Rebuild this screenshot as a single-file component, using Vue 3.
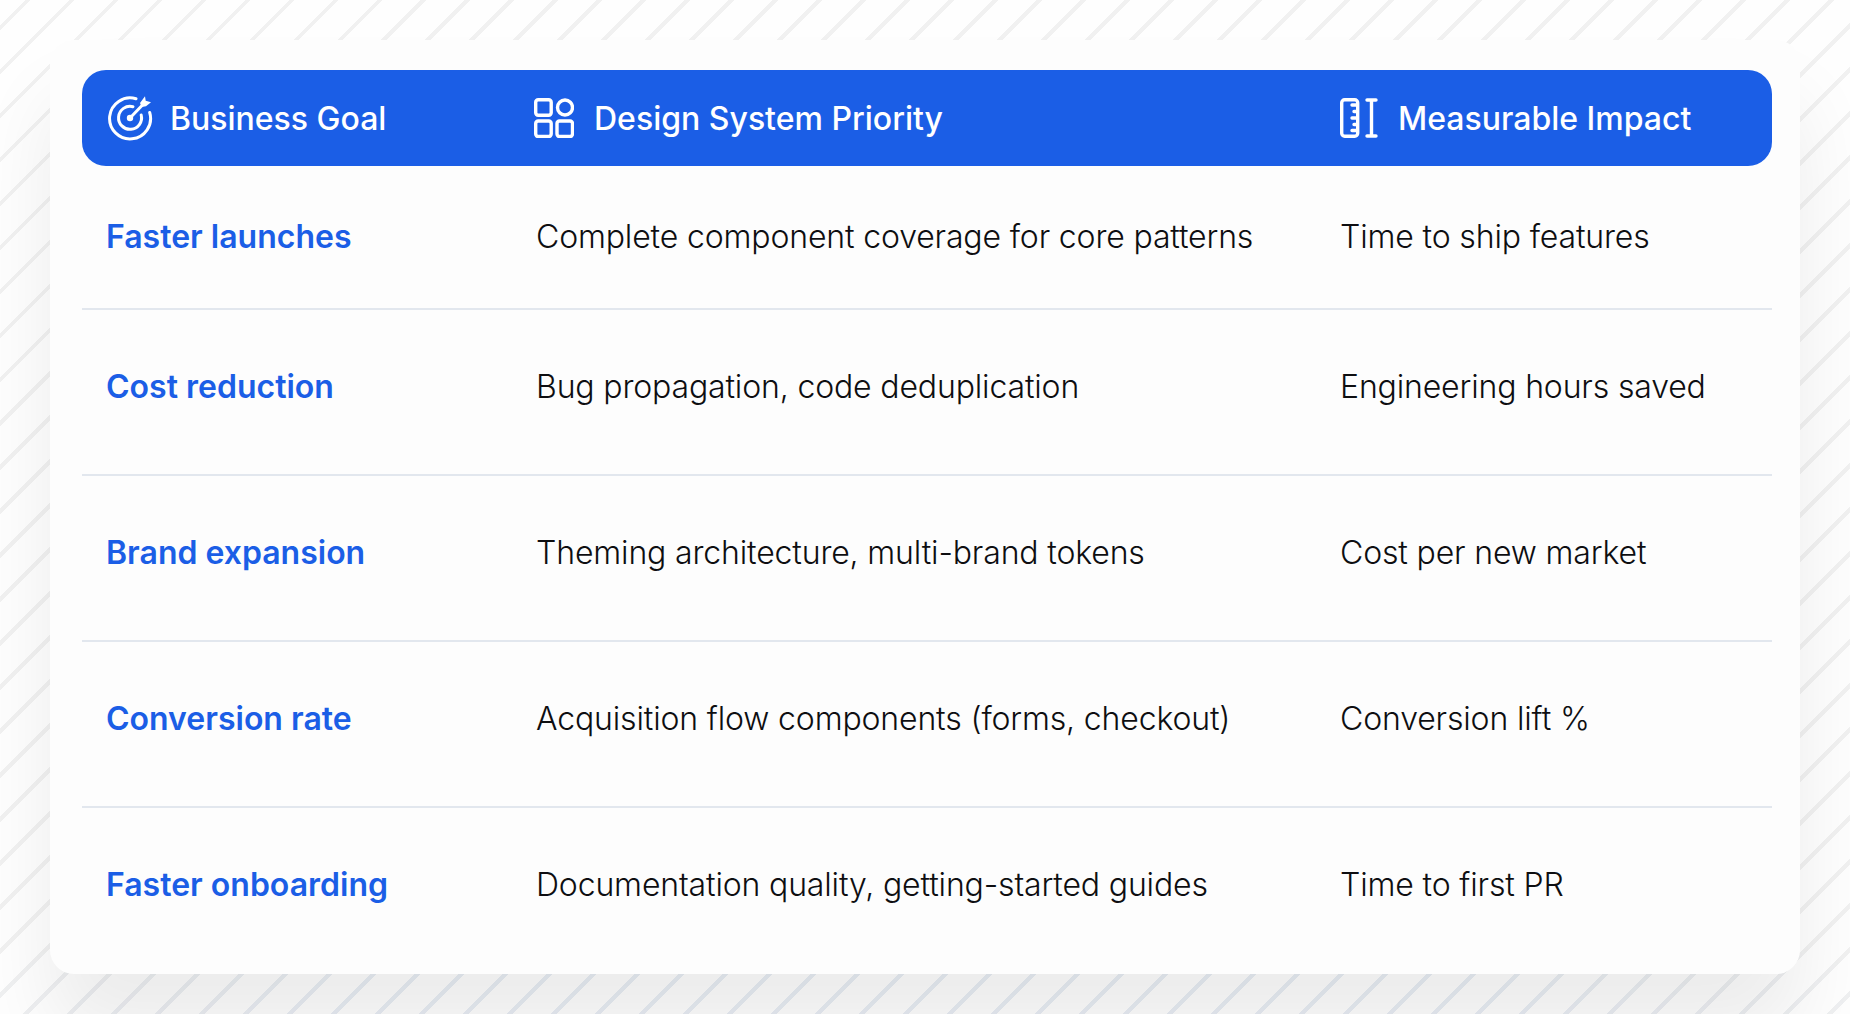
<template>
  <div class="page">
    <section class="card">
      <header class="row head">
        <div class="head-cell">
          <svg class="icon" width="48" height="48" viewBox="0 0 48 48" fill="none" stroke="#fff" stroke-width="3" stroke-linecap="round">
            <path d="M30 4.8A20.5 20.5 0 1 0 43.7 18.5" />
            <path d="M27 12.7A11.5 11.5 0 1 0 35.2 21" />
            <path d="M24 24 36 11.5" />
            <circle cx="24" cy="24" r="3.2" fill="#fff" stroke="none" />
            <path d="M34 9 39 2.3 39.7 6.7 45 8.3 40 12.3 35.7 13Z" fill="#fff" stroke="none" />
          </svg>
          <span>Business Goal</span>
        </div>
        <div class="head-cell shift">
          <svg class="icon" width="40" height="40" viewBox="0 0 40 40" fill="none" stroke="#fff" stroke-width="3.4" stroke-linejoin="round">
            <rect x="1.7" y="1.7" width="15.5" height="15.5" rx="2.5" />
            <circle cx="31" cy="9.5" r="7.5" />
            <rect x="1.7" y="23" width="15.5" height="15.5" rx="2.5" />
            <rect x="23" y="23" width="15.5" height="15.5" rx="2.5" />
          </svg>
          <span>Design System Priority</span>
        </div>
        <div class="head-cell">
          <svg class="icon" width="38" height="40" viewBox="0 0 38 40" fill="none" stroke="#fff" stroke-width="3.4" stroke-linecap="round" stroke-linejoin="round">
            <rect x="1.7" y="1.7" width="16" height="36.6" rx="3" />
            <path d="M17 7h-5M17 13.5h-3M17 20h-5M17 26.5h-3M17 32.5h-5" />
            <path d="M27 2h9M31.5 2v36M27 38h9" />
          </svg>
          <span>Measurable Impact</span>
        </div>
      </header>
      <div v-for="(item, i) in rows" :key="item.goal" class="row body" :class="{ first: i === 0 }">
        <div class="goal">{{ item.goal }}</div>
        <div class="text">{{ item.priority }}</div>
        <div class="text">{{ item.impact }}</div>
      </div>
    </section>
  </div>
</template>

<script setup>
const rows = [
  { goal: "Faster launches", priority: "Complete component coverage for core patterns", impact: "Time to ship features" },
  { goal: "Cost reduction", priority: "Bug propagation, code deduplication", impact: "Engineering hours saved" },
  { goal: "Brand expansion", priority: "Theming architecture, multi-brand tokens", impact: "Cost per new market" },
  { goal: "Conversion rate", priority: "Acquisition flow components (forms, checkout)", impact: "Conversion lift %" },
  { goal: "Faster onboarding", priority: "Documentation quality, getting-started guides", impact: "Time to first PR" },
];
</script>

<style scoped>
.page {
  position: relative;
  height: 1014px;
  padding: 40px 50px;
  box-sizing: border-box;
  overflow: hidden;
  font-family: Inter, "Liberation Sans", sans-serif;
  background:
    repeating-linear-gradient(135deg, transparent 0 17.7px, #f1f1f1 17.7px 21.9px, transparent 21.9px 31.11px),
    #fefefe;
}

/* stripes go bluish under the card */
.page::before {
  content: "";
  position: absolute;
  inset: 0;
  background: repeating-linear-gradient(135deg, transparent 0 17.7px, #e8edf4 17.7px 21.9px, transparent 21.9px 31.11px);
  -webkit-mask-image: radial-gradient(ellipse 1000px 150px at 50% 100%, #000 60%, transparent 100%);
  mask-image: radial-gradient(ellipse 1000px 150px at 50% 100%, #000 60%, transparent 100%);
}

.card {
  position: relative;
  height: 934px;
  padding: 30px 28px 0 32px;
  box-sizing: border-box;
  background: #fdfdfd;
  border-radius: 24px;
  box-shadow: 0 60px 80px rgba(0, 0, 0, 0.075);
}

.row {
  display: grid;
  grid-template-columns: 430px 804px 1fr;
  align-items: center;
  padding: 0 24px;
}

.head {
  height: 96px;
  background: #1b5ee6;
  border-radius: 24px;
  color: #fff;
  font-size: 32px;
  font-weight: 500;
}

.head-cell {
  display: flex;
  align-items: center;
  gap: 20px;
}

.head-cell:first-child {
  gap: 16px;
}

.shift {
  margin-left: -2px;
}

.icon {
  flex: none;
}

.body {
  height: 166px;
  padding-bottom: 11px;
  box-sizing: border-box;
  border-top: 2px solid #e2e7ee;
  font-size: 32px;
}

.body.first {
  height: 142px;
  padding-bottom: 1px;
  border-top: 0;
}

.goal {
  color: #1b5ee6;
  font-weight: 600;
}

.text {
  color: #0e0e11;
  font-weight: 300;
  letter-spacing: -0.15px;
}
</style>

<style>
html,
body {
  margin: 0;
  background: #fff;
}
</style>
